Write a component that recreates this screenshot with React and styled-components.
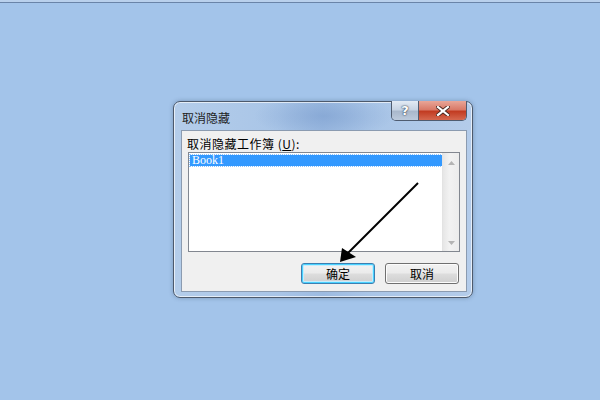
import React from 'react';
import styled, { createGlobalStyle } from 'styled-components';

const GlobalStyle = createGlobalStyle`
  html, body {
    margin: 0;
    padding: 0;
    background: #a3c4ea;
  }
  * {
    box-sizing: border-box;
  }
`;

const App = () => {
  return (
    <Page>
      <GlobalStyle />
      <TopEdge />
      <Dialog>
        <TitleBar>
          <Title>取消隐藏</Title>
          <CaptionButtons>
            <HelpButton>?</HelpButton>
            <CloseButton>
              <svg width="14" height="10" viewBox="0 0 14 10">
                <path
                  d="M2 1 L12 9 M12 1 L2 9"
                  stroke="#4a2a22"
                  strokeWidth="4"
                  strokeLinecap="square"
                />
                <path
                  d="M2 1 L12 9 M12 1 L2 9"
                  stroke="#ffffff"
                  strokeWidth="2.2"
                  strokeLinecap="square"
                />
              </svg>
            </CloseButton>
          </CaptionButtons>
        </TitleBar>
        <Client>
          <Label>
            取消隐藏工作簿 (<u>U</u>):
          </Label>
          <ListBox>
            <Items>
              <Item selected>Book1</Item>
            </Items>
            <ScrollBar>
              <ScrollArrow>
                <svg width="7" height="4" viewBox="0 0 7 4">
                  <path d="M0 4 L3.5 0 L7 4 Z" fill="#b4b4b4" />
                </svg>
              </ScrollArrow>
              <ScrollArrow>
                <svg width="7" height="4" viewBox="0 0 7 4">
                  <path d="M0 0 L3.5 4 L7 0 Z" fill="#b4b4b4" />
                </svg>
              </ScrollArrow>
            </ScrollBar>
          </ListBox>
          <ButtonRow>
            <PushButton primary>确定</PushButton>
            <PushButton>取消</PushButton>
          </ButtonRow>
        </Client>
      </Dialog>
      <Overlay width="600" height="400" viewBox="0 0 600 400">
        <line x1="418" y1="183" x2="348" y2="253" stroke="#000" strokeWidth="2" />
        <path d="M340 262 L342 248 L356 257 Z" fill="#000" />
      </Overlay>
    </Page>
  );
};

export default App;

const Page = styled.div`
  position: relative;
  width: 600px;
  height: 400px;
  overflow: hidden;
  background: #a3c4ea;
  padding-left: 173px;
  font-family: 'Noto Sans CJK SC', 'Noto Sans', sans-serif;
`;

const TopEdge = styled.div`
  height: 3px;
  margin-left: -173px;
  background: #b9d0ec;
  border-bottom: 1px solid #6a84a8;
  margin-bottom: 98px;
`;

const Dialog = styled.div`
  width: 300px;
  height: 197px;
  border: 1px solid #4d5a6c;
  border-radius: 7px;
  padding: 0 5px 5px 7px;
  display: flex;
  flex-direction: column;
  background:
    radial-gradient(ellipse 70px 22px at 150px 14px, rgba(120, 155, 205, 0.55), rgba(120, 155, 205, 0) 100%),
    linear-gradient(to right, #b4cdea 0%, #a9c5e7 35%, #9dbbe1 50%, #a9c5e7 65%, #b4ccea 100%);
  box-shadow:
    inset 0 0 0 1px rgba(255, 255, 255, 0.65),
    0 0 4px rgba(40, 60, 90, 0.35);
`;

const TitleBar = styled.div`
  height: 28px;
  display: flex;
  align-items: flex-start;
  justify-content: space-between;
`;

const Title = styled.div`
  padding-top: 8px;
  padding-left: 1px;
  font-size: 12px;
  line-height: 15px;
  color: #1e1e1e;
`;

const CaptionButtons = styled.div`
  display: flex;
  margin-top: -1px;
  height: 20px;
  border: 1px solid #4f5c70;
  border-top: none;
  border-radius: 0 0 5px 5px;
  overflow: hidden;
`;

const HelpButton = styled.div`
  width: 27px;
  height: 19px;
  display: flex;
  align-items: center;
  justify-content: center;
  font-family: 'DejaVu Sans', sans-serif;
  font-weight: bold;
  font-size: 13px;
  color: #ffffff;
  text-shadow: 0 0 2px #2c3a4e, 0 0 1px #2c3a4e;
  border-right: 1px solid #4f5c70;
  background: linear-gradient(to bottom, #e2eaf4 0%, #c7d4e4 45%, #a9b8cc 55%, #bccadc 100%);
`;

const CloseButton = styled.div`
  width: 47px;
  height: 19px;
  display: flex;
  align-items: center;
  justify-content: center;
  background: linear-gradient(to bottom, #e8a698 0%, #d97a68 45%, #c23c22 55%, #d5684f 100%);
`;

const Client = styled.div`
  flex: 1;
  background: #f0f0f0;
  border: 1px solid #8b9bb0;
  padding: 4px 7px 0 5px;
  display: flex;
  flex-direction: column;
`;

const Label = styled.div`
  height: 17px;
  font-size: 12px;
  line-height: 17px;
  letter-spacing: 0.5px;
  color: #000;
  u {
    text-decoration: underline;
    text-underline-offset: 1px;
  }
`;

const ListBox = styled.div`
  width: 272px;
  height: 100px;
  margin-left: 1px;
  border: 1px solid #828790;
  background: #ffffff;
  display: flex;
`;

const Items = styled.div`
  flex: 1;
  padding: 2px 0 0 1px;
`;

const Item = styled.div`
  height: 11px;
  padding-left: 2px;
  font-family: 'Liberation Serif', serif;
  font-size: 12px;
  line-height: 11px;
  color: ${(p) => (p.selected ? '#ffffff' : '#000000')};
  background: ${(p) => (p.selected ? '#3399ff' : 'transparent')};
  outline: ${(p) => (p.selected ? '1px dotted #8fc4ff' : 'none')};
`;

const ScrollBar = styled.div`
  width: 17px;
  background: linear-gradient(to right, #e6e6e6, #f2f2f2 40%, #ececec);
  border-left: 1px solid #e3e3e3;
  display: flex;
  flex-direction: column;
  justify-content: space-between;
  padding: 7px 0 5px;
`;

const ScrollArrow = styled.div`
  height: 6px;
  display: flex;
  align-items: center;
  justify-content: center;
`;

const ButtonRow = styled.div`
  display: flex;
  justify-content: flex-end;
  gap: 10px;
  margin-top: 11px;
  padding-right: 0;
`;

const PushButton = styled.div`
  width: 74px;
  height: 21px;
  border: 1px solid ${(p) => (p.primary ? '#3c7fb1' : '#707070')};
  border-radius: 3px;
  display: flex;
  align-items: center;
  justify-content: center;
  font-size: 12px;
  color: #000;
  box-shadow: ${(p) =>
    p.primary
      ? 'inset 0 0 0 1px #48d1ff, inset 0 0 0 2px #c5ecfc'
      : 'inset 0 0 0 1px #fcfcfc'};
  background: linear-gradient(to bottom, #f2f2f2 0%, #ebebeb 48%, #dddddd 52%, #cfcfcf 100%);
`;

const Overlay = styled.svg`
  position: absolute;
  left: 0;
  top: 0;
  pointer-events: none;
`;
